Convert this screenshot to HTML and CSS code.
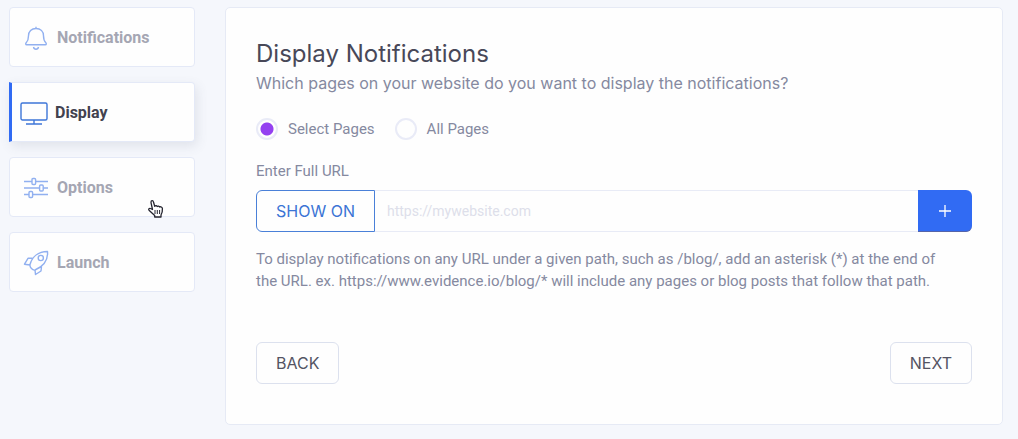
FILE: index.html
```html
<!DOCTYPE html>
<html lang="en">
<head>
<meta charset="utf-8">
<title>Display Notifications</title>
<link rel="stylesheet" href="styles.css">
</head>
<body>
<div class="layout">
  <nav class="steps">
    <a class="step" href="#notifications">
      <svg class="step-icon" viewBox="0 0 28 28" aria-hidden="true"><path d="M14 2.700v1.800M4.700 20.800c-1.200 0-1.200-1.300-.5-2 2-2 2.300-4 2.300-7 0-4.500 3-7.300 7.500-7.300s7.500 2.800 7.500 7.300c0 3 .3 5 2.300 7 .7.700.7 2-.5 2zM11.500 23c.3 1.600 1.200 2.200 2.500 2.200s2.200-.6 2.500-2.200"/></svg>
      <span>Notifications</span>
    </a>
    <a class="step step-active" href="#display" aria-current="step">
      <svg class="step-icon" viewBox="0 0 28 28" aria-hidden="true"><rect x="1" y="4" width="26" height="17" rx="1.500"/><path d="M14 21v4M6 25h16"/></svg>
      <span>Display</span>
    </a>
    <a class="step" href="#options">
      <svg class="step-icon" viewBox="0 0 28 28" aria-hidden="true"><path d="M2 7.500h8M13.600 7.500H26M2 14h15.600M21.200 14H26M2 20.500h5M10.600 20.500H26"/><rect x="10" y="4.500" width="3.600" height="6" rx="1"/><rect x="17.600" y="11" width="3.600" height="6" rx="1"/><rect x="7" y="17.500" width="3.600" height="6" rx="1"/></svg>
      <span>Options</span>
    </a>
    <a class="step" href="#launch">
      <svg class="step-icon" viewBox="0 0 28 28" aria-hidden="true"><path d="M8 15.500C10 8 16 2.500 25.500 2.500c.7 8.500-4.500 15-12.500 18.500-2.200.6-5.500-2.500-5-5.500zM10.500 9.300H6L2.500 15.200l5.500.8M19.500 17.500l-.5 4.500-5.500 3.500-.5-4.500"/><circle cx="18.800" cy="9" r="2.600"/></svg>
      <span>Launch</span>
    </a>
    <svg class="pointer" viewBox="0 0 18 20" aria-hidden="true"><path d="M5.500 10.500 4 3.600C3.800 1.300 6 1 6.500 3l1.200 4.300c.7-.9 2-.7 2.500.2.700-.7 2-.5 2.400.5 1-.6 2.600 0 2.800 1.500.2 3-.3 4.800-1.400 6.500V18H7.700v-1.500L2 11.200c-.9-1.200.4-2.300 1.500-1.700z"/><path class="pointer-lines" d="M8 11v4M10.300 11v4M12.600 11v4"/></svg>
  </nav>
  <main class="panel">
    <h1 class="title">Display Notifications</h1>
    <p class="subtitle">Which pages on your website do you want to display the notifications?</p>
    <div class="choices" role="radiogroup" aria-label="Pages">
      <label class="choice"><input class="radio" type="radio" name="pages" checked>Select Pages</label>
      <label class="choice"><input class="radio" type="radio" name="pages">All Pages</label>
    </div>
    <label class="field-label" for="url">Enter Full URL</label>
    <div class="url-row">
      <button class="button show-on" type="button">SHOW ON</button>
      <input class="url" id="url" type="text" placeholder="https://mywebsite.com">
      <button class="add" type="button" aria-label="Add URL"><svg class="plus" viewBox="0 0 12 12" aria-hidden="true"><path d="M6 0v12M0 6h12"/></svg></button>
    </div>
    <p class="help">To display notifications on any URL under a given path, such as /blog/, add an asterisk (*) at the end of the URL. ex. https://www.evidence.io/blog/* will include any pages or blog posts that follow that path.</p>
    <div class="actions">
      <button class="button" type="button">BACK</button>
      <button class="button" type="button">NEXT</button>
    </div>
  </main>
</div>
</body>
</html>
```
FILE: styles.css
```css
* { box-sizing: border-box; }
body {
  margin: 0;
  background: #f5f7fc;
  color: #8589a0;
  font: 15px/22px Roboto, "Liberation Sans", sans-serif;
}
.layout {
  display: grid;
  grid-template-columns: 186px 1fr;
  gap: 30px;
  align-items: start;
  padding: 7px 15px 14px 9px;
}
.steps { position: relative; display: grid; gap: 15px; }
.step {
  display: flex;
  align-items: center;
  gap: 7px;
  height: 60px;
  padding: 2px 0 0 12px;
  border: 1px solid #e4e9f7;
  border-radius: 4px;
  background: #fefefe;
  color: #a5a6b3;
  font-size: 16px;
  font-weight: 700;
  text-decoration: none;
}
.step-active {
  padding-left: 8px;
  border-left: 3px solid #316bf3;
  border-radius: 0 4px 4px 0;
  color: #42424f;
  box-shadow: 2px 4px 12px rgba(70, 80, 110, .12);
}
.step-icon { width: 28px; height: 28px; fill: none; stroke: #91b0f0; stroke-width: 1.4; stroke-linejoin: round; }
.step-active .step-icon { stroke: #3e76d8; }
.pointer {
  position: absolute;
  left: 138px;
  top: 192px;
  width: 18px;
  height: 20px;
  fill: #fff;
  stroke: #23232e;
  stroke-width: 1.3;
  stroke-linejoin: round;
}
.pointer-lines { stroke-width: 1; }
.panel {
  padding: 30px 30px 40px;
  border: 1px solid #e6eaf5;
  border-radius: 5px;
  background: #fefefe;
}
.title { margin: 0; color: #484858; font: 400 24px/32px Inter, sans-serif; }
.subtitle { margin: 0; font: 400 16px/26px Inter, sans-serif; }
.choices { display: flex; gap: 20px; margin-top: 22px; }
.choice { display: flex; align-items: center; gap: 10px; }
.radio {
  appearance: none;
  width: 22px;
  height: 22px;
  margin: 0;
  border: 2px solid #e9ebf7;
  border-radius: 50%;
  background: #fefefe;
}
.radio:checked { background: radial-gradient(circle, #9440f0 6px, #fefefe 7px); }
.field-label { display: block; margin-top: 20px; }
.url-row { display: flex; margin-top: 8px; }
.button {
  height: 42px;
  padding: 0 19px;
  border: 1px solid #dce1ee;
  border-radius: 6px;
  background: #fefefe;
  color: #545463;
  font: 400 16px/20px Inter, sans-serif;
}
.show-on { border-color: #4a80d8; border-radius: 6px 0 0 6px; color: #3b74d5; }
.url {
  flex: 1;
  min-width: 0;
  height: 42px;
  padding: 0 12px;
  border: solid #e8ebf6;
  border-width: 1px 0;
  background: #fefefe;
  color: #545463;
  font: 400 14px/20px Roboto, sans-serif;
}
.url::placeholder { color: #dddfea; }
.add {
  display: grid;
  place-items: center;
  width: 54px;
  height: 42px;
  padding: 0;
  border: 0;
  border-bottom: 1px solid #5564a8;
  border-radius: 0 6px 6px 0;
  background: #316bf3;
}
.plus { width: 12px; height: 12px; fill: none; stroke: #fff; stroke-width: 1.3; }
.help { margin: 16px 0 0; padding-right: 16px; }
.actions { display: flex; justify-content: space-between; margin-top: 50px; }
```
